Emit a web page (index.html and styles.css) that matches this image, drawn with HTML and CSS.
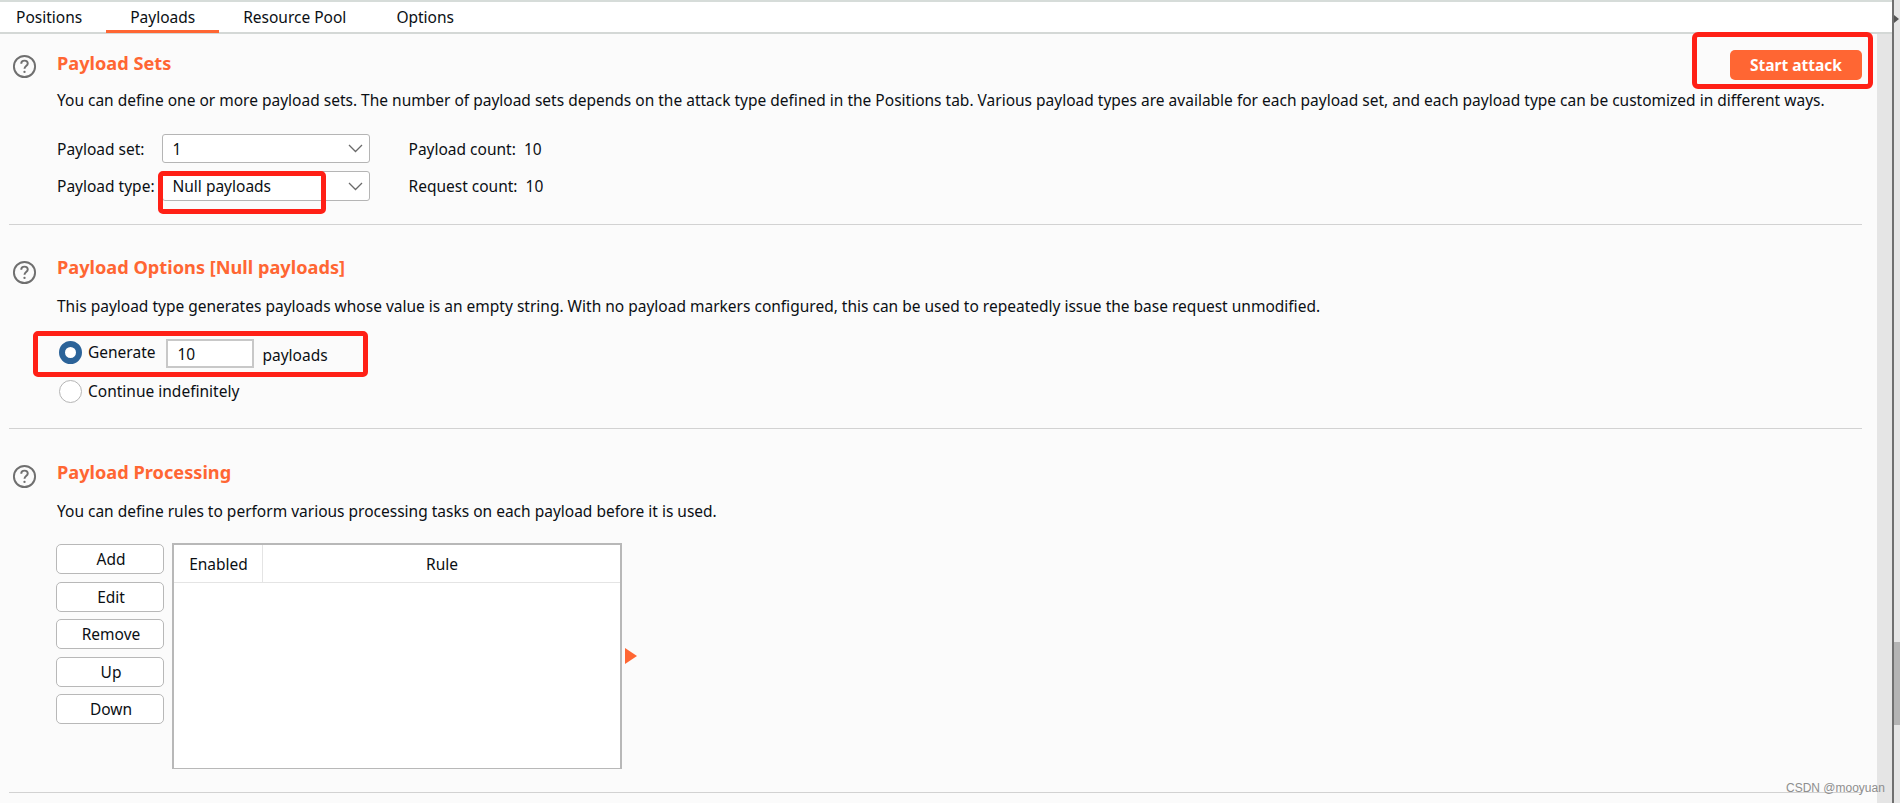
FILE: index.html
```html
<!DOCTYPE html>
<html lang="en">
<head>
<meta charset="utf-8">
<title>Payloads</title>
<link rel="stylesheet" href="styles.css">
</head>
<body>
<div class="shell">
  <div class="main">
    <nav class="tabs">
      <span class="tab">Positions</span>
      <span class="tab active">Payloads</span>
      <span class="tab">Resource Pool</span>
      <span class="tab">Options</span>
    </nav>
    <div class="content">
      <section class="panel sets">
        <svg class="help" viewBox="0 0 26 26"><circle cx="13" cy="13" r="11" /><path d="M9.6 10.2c0-2 1.5-3.3 3.4-3.3s3.4 1.2 3.4 3c0 2.6-3.4 2.8-3.4 5.4" /><circle class="dot" cx="13" cy="18.6" r="1.2" /></svg>
        <div class="body">
          <div class="headrow">
            <h2>Payload Sets</h2>
            <span class="attack-wrap"><button class="attack">Start attack</button></span>
          </div>
          <p class="desc">You can define one or more payload sets. The number of payload sets depends on the attack type defined in the Positions tab. Various payload types are available for each payload set, and each payload type can be customized in different ways.</p>
          <div class="formgrid">
            <span>Payload set:</span>
            <span class="select"><span>1</span><svg viewBox="0 0 15 9"><path d="M1 1l6.5 6.5L14 1" /></svg></span>
            <span class="count">Payload count:&nbsp; 10</span>
            <span>Payload type:</span>
            <span class="select"><span>Null payloads</span><svg viewBox="0 0 15 9"><path d="M1 1l6.5 6.5L14 1" /></svg><i class="mark-null"></i></span>
            <span class="count">Request count:&nbsp; 10</span>
          </div>
        </div>
      </section>
      <section class="panel options">
        <svg class="help" viewBox="0 0 26 26"><circle cx="13" cy="13" r="11" /><path d="M9.6 10.2c0-2 1.5-3.3 3.4-3.3s3.4 1.2 3.4 3c0 2.6-3.4 2.8-3.4 5.4" /><circle class="dot" cx="13" cy="18.6" r="1.2" /></svg>
        <div class="body">
          <h2>Payload Options [Null payloads]</h2>
          <p class="desc">This payload type generates payloads whose value is an empty string. With no payload markers configured, this can be used to repeatedly issue the base request unmodified.</p>
          <div class="radios">
            <div class="radio-row generate">
              <span class="radio on"></span><span class="gen-label">Generate</span>
              <span class="numbox">10</span><span class="unit">payloads</span>
            </div>
            <div class="radio-row second"><span class="radio"></span><span>Continue indefinitely</span></div>
          </div>
        </div>
      </section>
      <section class="panel processing">
        <svg class="help" viewBox="0 0 26 26"><circle cx="13" cy="13" r="11" /><path d="M9.6 10.2c0-2 1.5-3.3 3.4-3.3s3.4 1.2 3.4 3c0 2.6-3.4 2.8-3.4 5.4" /><circle class="dot" cx="13" cy="18.6" r="1.2" /></svg>
        <div class="body">
          <h2>Payload Processing</h2>
          <p class="desc">You can define rules to perform various processing tasks on each payload before it is used.</p>
          <div class="rules">
            <div class="buttons">
              <button class="btn">Add</button>
              <button class="btn">Edit</button>
              <button class="btn">Remove</button>
              <button class="btn">Up</button>
              <button class="btn">Down</button>
            </div>
            <div class="table">
              <div class="thead"><span class="th enabled">Enabled</span><span class="th rule">Rule</span></div>
            </div>
            <span class="arrow"></span>
          </div>
        </div>
      </section>
    </div>
  </div>
  <div class="gutter"></div>
  <div class="scroll"><span class="cue"></span><div class="thumb"></div></div>
</div>
<span class="watermark">CSDN @mooyuan</span>
</body>
</html>
```
FILE: styles.css
```css
*, *::before, *::after { box-sizing: border-box; }
html, body { margin: 0; height: 100%; overflow: hidden; }
body { font: 15.5px/20px "Noto Sans", sans-serif; color: #0b0f14; background: #fbfbfb; position: relative; }
.shell { display: flex; height: 803px; }
.main { width: 1877px; background: #fbfbfb; flex: none; }
.gutter { width: 15px; background: #e5e5e5; flex: none; margin-top: 34px; }
.scroll { width: 8px; flex: none; background: #e6e6e6; border-left: 2px solid #707070; position: relative; }
.cue { position: absolute; left: 0; top: 15px; width: 0; height: 0; border-left: 5px solid #555; border-top: 4px solid transparent; border-bottom: 4px solid transparent; }
.thumb { position: absolute; left: 0; right: 0; top: 642px; height: 83px; background: #b4b4b4; }
.tabs { width: 1892px; height: 34px; background: #fff; display: flex; padding-left: 16px; border-top: 2px solid #d6dcd9; border-bottom: 2px solid #d4d8d6; }
.tab { height: 31px; line-height: 31px; padding: 0 24px; display: block; }
.tab:first-child { padding-left: 0; }
.tab:nth-child(4) { margin-left: 2px; }
.tab.active { border-bottom: 3px solid #ff6633; }
.panel { display: flex; margin-left: 9px; width: 1853px; border-bottom: 1px solid #d2d2d2; }
.sets { height: 191px; }
.options { height: 204px; }
.processing { height: 364px; }
.help { width: 25px; height: 25px; margin-left: 3px; flex: none; fill: none; stroke: #6f6f6f; stroke-width: 2; }
.help .dot { fill: #6f6f6f; stroke: none; }
.sets .help { margin-top: 20px; }
.options .help { margin-top: 35px; }
.processing .help { margin-top: 35px; }
.body { margin-left: 20px; flex: 1; min-width: 0; }
h2 { margin: 0; font-size: 18.2px; line-height: 24px; font-weight: 700; color: #ff6633; }
.sets h2 { padding-top: 17px; }
.options h2 { padding-top: 30px; }
.processing h2 { padding-top: 31px; }
.headrow { display: flex; justify-content: space-between; align-items: flex-start; }
.desc { margin: 15px 0 0; white-space: nowrap; }
.options .desc { margin-top: 17px; }
.processing .desc { margin-top: 17px; }
.attack-wrap { display: block; position: relative; margin-top: 16px; margin-bottom: -10px; }
.attack-wrap::before { content: ""; position: absolute; left: -38px; top: -18px; width: 181px; height: 57px; border: 5px solid #ff2016; border-radius: 6px; }
.attack { display: block; width: 132px; height: 30px; background: #ff6633; color: #fff; border: 0; border-radius: 5px; padding: 0; font: 700 15.5px/20px "Noto Sans", sans-serif; }
.formgrid { display: grid; grid-template-columns: 104.5px 208px auto; grid-template-rows: 29px 30px; row-gap: 8px; margin-top: 24px; justify-content: start; align-items: center; }
.select { width: 208px; height: 100%; background: #fff; border: 1px solid #b5b5b5; border-radius: 3px; display: flex; align-items: center; justify-content: space-between; padding: 0 6px 0 10px; position: relative; }
.select svg { width: 15px; height: 9px; fill: none; stroke: #6a6a6a; stroke-width: 1.3; }
.count { margin-left: 39px; }
.mark-null { position: absolute; left: -5px; top: -1px; width: 168px; height: 43px; border: 5px solid #ff2016; border-radius: 5px; }
.radios { margin-top: 23px; margin-left: 2px; }
.radio-row { display: flex; align-items: center; height: 29px; }
.second { margin-top: 12px; height: 22px; }
.generate { position: relative; }
.generate::before { content: ""; position: absolute; left: -26px; top: -8px; width: 335px; height: 46px; border: 5px solid #ff2016; border-radius: 5px; }
.radio { width: 23px; height: 23px; border-radius: 50%; border: 1px solid #b5b5b5; background: #fff; margin-right: 6px; flex: none; margin-top: -2px; }
.radio.on { border: 6px solid #2b6399; }
.second .radio { margin-top: 0; }
.gen-label { margin-top: -3px; margin-right: 11px; }
.numbox { width: 88px; height: 29px; background: #fff; border: 2px solid #c8c8c8; padding-left: 9px; line-height: 27px; margin-right: 8px; }
.unit { margin-top: 2px; }
.rules { display: flex; margin-top: 22px; margin-left: -1px; align-items: flex-start; }
.buttons { display: flex; flex-direction: column; gap: 7.5px; width: 108px; flex: none; margin-top: 1px; }
.btn { height: 30px; width: 108px; padding: 0 0 0 2px; background: #fff; border: 1px solid #b8b8b8; border-radius: 5px; font: 15.5px/20px "Noto Sans", sans-serif; color: #0b0f14; }
.table { width: 450px; height: 226px; margin-left: 8px; background: #fff; border: 2px solid #b8b8b8; border-bottom-width: 1px; }
.thead { display: flex; height: 38px; border-bottom: 1px solid #e4e4e4; }
.th { display: flex; align-items: center; justify-content: center; padding-left: 1px; }
.enabled { width: 89px; border-right: 1px solid #e4e4e4; }
.rule { flex: 1; }
.arrow { width: 0; height: 0; border-left: 12px solid #ff6633; border-top: 8px solid transparent; border-bottom: 8px solid transparent; margin-left: 3px; margin-top: 105px; }
.watermark { position: absolute; left: 1786px; top: 781px; font: 12px/14px "Liberation Sans", sans-serif; color: #8e8e8e; }
```
